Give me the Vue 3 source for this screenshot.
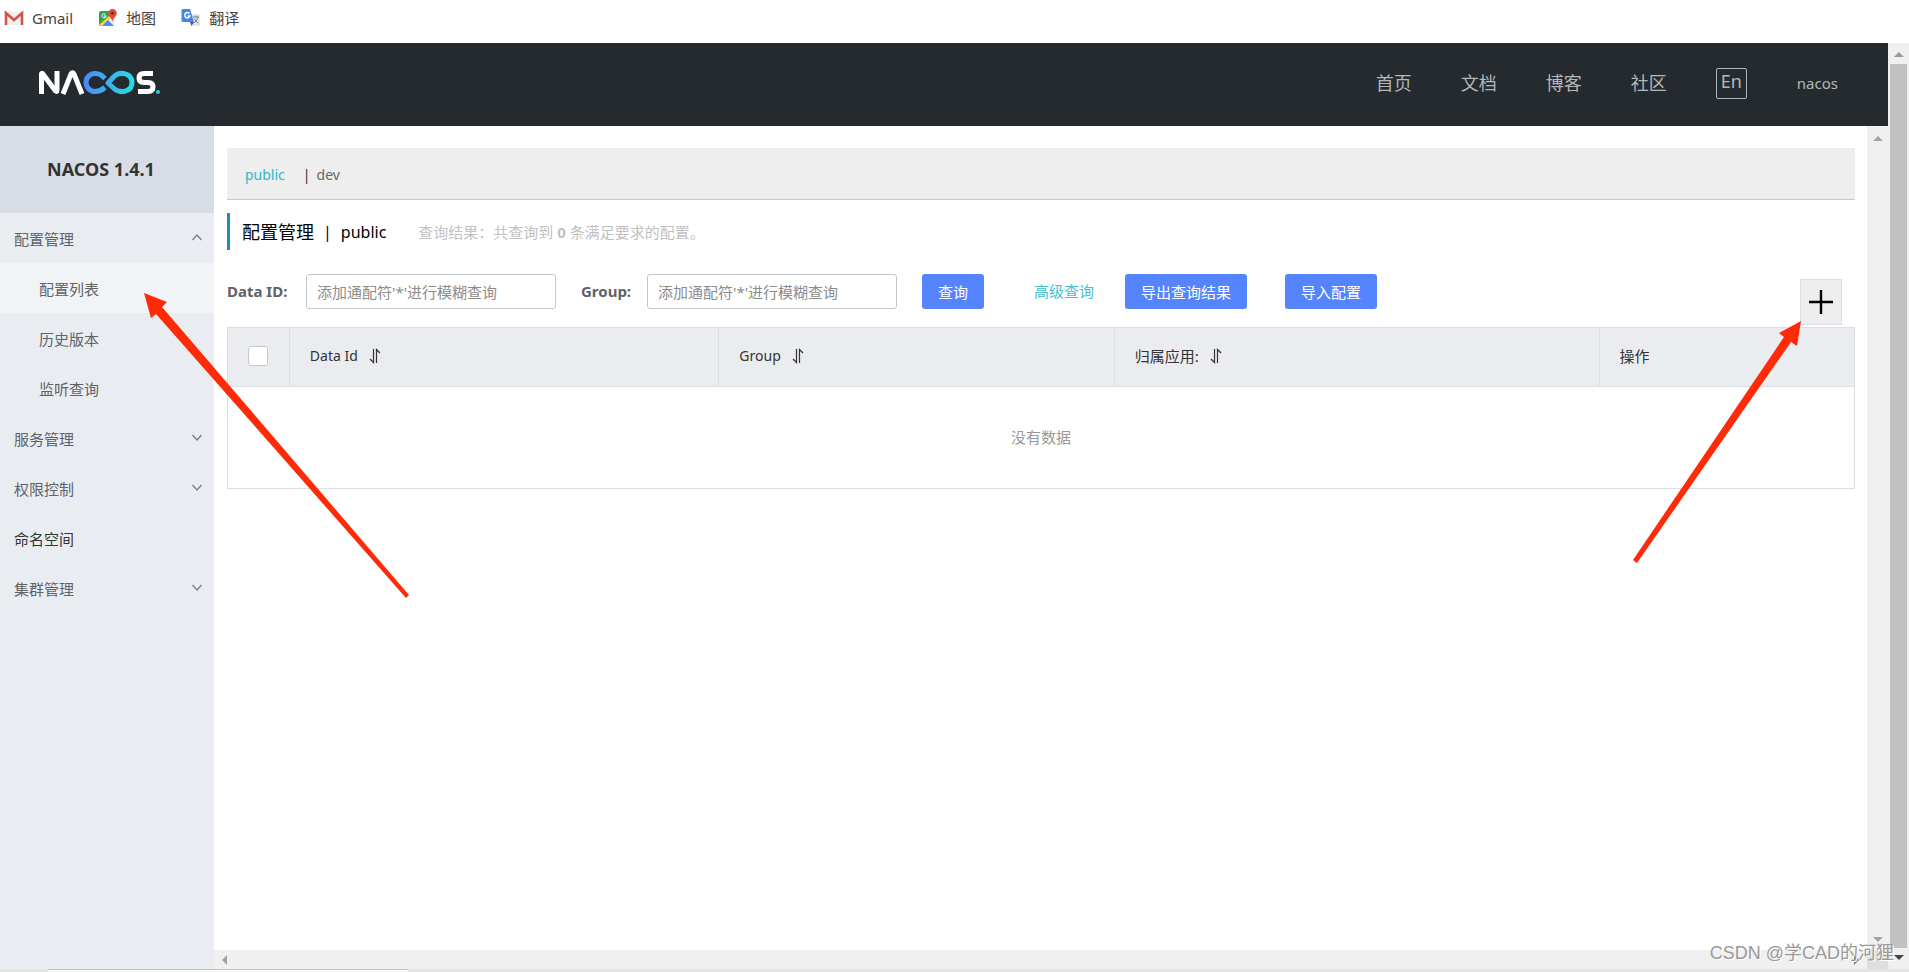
<script setup>
import { ref } from 'vue'

const links = ['首页', '文档', '博客', '社区']
const menu = [
  { text: '配置管理', arrow: 'up' },
  { text: '配置列表', sub: true, active: true },
  { text: '历史版本', sub: true },
  { text: '监听查询', sub: true },
  { text: '服务管理', arrow: 'down' },
  { text: '权限控制', arrow: 'down' },
  { text: '命名空间', dark: true },
  { text: '集群管理', arrow: 'down' },
]
const columns = [
  { text: 'Data Id', latin: true },
  { text: 'Group', latin: true },
  { text: '归属应用:' },
]
const dataId = ref('')
const group = ref('')
</script>

<template>
  <div class="page">
    <nav class="bookmarks" aria-label="书签">
      <a href="#">
        <svg width="20" height="16" viewBox="0 0 20 16">
          <rect x="1" y="2" width="18" height="13" rx="1" fill="#f1efee" />
          <path d="M2 15V3l8 7 8-7v12" fill="none" stroke="#d5524a" stroke-width="2.6" />
        </svg>
        <span>Gmail</span>
      </a>
      <a href="#">
        <svg width="20" height="18" viewBox="0 0 20 18">
          <rect x="1" y="2" width="16" height="15" rx="2" fill="#eceff0" />
          <path d="M3 2h9l-1 6-9 9q-1 0-1-2V4q0-2 2-2z" fill="#34a35a" />
          <path d="M1 16L12 6l2 2L5 17H2z" fill="#fbd04b" />
          <path d="M4 17l6-6 6 6z" fill="#4c8df5" />
          <path d="M7.500 5.500a2 2 0 1 0 .5 1.500H6" fill="none" stroke="#fff" />
          <path d="M14.500 0a4.300 4.300 0 0 1 4.300 4.300c0 3-3.500 4.500-4.300 8.500-.8-4-4.300-5.500-4.300-8.500A4.300 4.300 0 0 1 14.500 0z" fill="#e04a3f" />
          <circle cx="14.500" cy="4.300" r="1.500" fill="#7d2019" />
        </svg>
        <span>地图</span>
      </a>
      <a href="#">
        <svg width="20" height="18" viewBox="0 0 20 18">
          <path d="M9 5h8q2 0 2 2v9q0 1-1 1h-6z" fill="#e3e5e8" />
          <path d="M2 0h7l4 13H2q-1.500 0-1.500-1.500v-10Q.5 0 2 0z" fill="#4a83e8" />
          <path d="M9 13h4l-2.500 4z" fill="#3058b0" />
          <path d="M8.500 4.500A2.700 2.700 0 1 0 9 7H6.500" fill="none" stroke="#fff" stroke-width="1.400" />
          <path d="M12 8h6M15 6.500V8M17 8q-1 4-4 6M13.500 9.500q1 3 4 4.500" fill="none" stroke="#76828d" />
        </svg>
        <span>翻译</span>
      </a>
    </nav>

    <div class="viewport">
      <div class="app">
        <header class="topbar">
          <a href="#" aria-label="Nacos" class="logo">
            <svg width="124" height="26" viewBox="0 0 124 26">
              <defs>
                <linearGradient id="loop" x1="46" x2="96" y1="0" y2="0" gradientUnits="userSpaceOnUse">
                  <stop offset="0" stop-color="#4a86f7" />
                  <stop offset="1" stop-color="#26dce3" />
                </linearGradient>
              </defs>
              <g fill="none" stroke-width="5">
                <path d="M4.500 24V4q0-1 1-.5L18.500 21q1.500 1 1.500-.5V1" stroke="#fff" />
                <path d="M26 24L34 4q1.500-2.500 3 0l8 20" stroke="#fff" />
                <path d="M68 17.500C64 21 61 21.500 58 21.500a9 9 0 0 1 0-18c5 0 7 2 10 5" stroke="url(#loop)" />
                <path d="M71 13L77 6.500C83 1 95 3 95 12.500S83 24 77 18.500z" stroke="url(#loop)" stroke-linejoin="round" />
                <path d="M116 3.500h-9q-5 0-5 4.500t5 4.500h4q5 0 5 4.500t-5 4.500h-10" stroke="#fff" />
              </g>
              <circle cx="121" cy="22" r="2" fill="#26cfe0" />
            </svg>
          </a>
          <nav class="toplinks">
            <a v-for="l in links" :key="l" href="#">{{ l }}</a>
            <button class="lang" type="button">En</button>
            <a href="#" class="user">nacos</a>
          </nav>
        </header>

        <div class="body">
          <aside class="sidebar">
            <h1>NACOS 1.4.1</h1>
            <ul>
              <li v-for="m in menu" :key="m.text">
                <a href="#" :class="{ sub: m.sub, active: m.active, dark: m.dark }">
                  <span>{{ m.text }}</span>
                  <svg v-if="m.arrow" :class="m.arrow" width="12" height="12" viewBox="0 0 12 12">
                    <path v-if="m.arrow === 'up'" d="M1.500 7L6 2l4.500 5" fill="none" stroke="#777c82" stroke-width="1.200" />
                    <path v-else d="M1.500 2L6 7l4.500-5" fill="none" stroke="#777c82" stroke-width="1.200" />
                  </svg>
                </a>
              </li>
            </ul>
          </aside>

          <div class="frame">
            <main>
              <div class="spaces">
                <a href="#" class="current">public</a>
                <span class="bar">|</span>
                <a href="#">dev</a>
              </div>
              <div class="heading">
                <h2><span>配置管理</span><span class="latin">|</span><span class="latin">public</span></h2>
                <p>查询结果：共查询到 <strong>0</strong> 条满足要求的配置。</p>
              </div>
              <form class="search" @submit.prevent>
                <label for="data-id">Data ID:</label>
                <input id="data-id" v-model="dataId" type="text" placeholder="添加通配符'*'进行模糊查询">
                <label for="group" class="second">Group:</label>
                <input id="group" v-model="group" type="text" placeholder="添加通配符'*'进行模糊查询">
                <button type="submit" class="query">查询</button>
                <a href="#" class="advanced">高级查询</a>
                <button type="button" class="export">导出查询结果</button>
                <button type="button" class="import">导入配置</button>
                <button type="button" class="add" aria-label="新建配置">
                  <svg width="26" height="26" viewBox="0 0 26 26">
                    <path d="M13 1v24M1 13h24" stroke="#000" stroke-width="2.400" />
                  </svg>
                </button>
              </form>
              <table>
                <colgroup>
                  <col class="c-check"><col class="c-id"><col class="c-group"><col class="c-app"><col>
                </colgroup>
                <thead>
                  <tr>
                    <th class="check"><input type="checkbox" aria-label="全选"></th>
                    <th v-for="c in columns" :key="c.text">
                      <span class="th" :class="{ small: c.latin }">{{ c.text }}
                        <svg width="14" height="16" viewBox="0 0 14 16">
                          <path d="M5.500 1v13.500L2 11M8.500 15V1.500L12 5" fill="none" stroke="#333" stroke-width="1.200" />
                        </svg>
                      </span>
                    </th>
                    <th>操作</th>
                  </tr>
                </thead>
                <tbody>
                  <tr><td colspan="5">没有数据</td></tr>
                </tbody>
              </table>
            </main>
            <div class="vscroll">
              <svg width="10" height="5" viewBox="0 0 10 5"><path d="M0 5l5-5 5 5z" fill="#a3a3a3" /></svg>
              <svg width="10" height="5" viewBox="0 0 10 5"><path d="M0 0l5 5 5-5z" fill="#a3a3a3" /></svg>
            </div>
            <div class="hscroll">
              <svg width="5" height="10" viewBox="0 0 5 10"><path d="M5 0L0 5l5 5z" fill="#a3a3a3" /></svg>
              <svg width="5" height="10" viewBox="0 0 5 10"><path d="M0 0l5 5-5 5z" fill="#777" /></svg>
            </div>
            <div class="corner"></div>
          </div>
        </div>
      </div>
      <div class="outer-scroll">
        <svg width="10" height="5" viewBox="0 0 10 5"><path d="M0 5l5-5 5 5z" fill="#9a9a9a" /></svg>
        <div class="thumb"></div>
        <svg width="10" height="5" viewBox="0 0 10 5"><path d="M0 0l5 5 5-5z" fill="#444" /></svg>
      </div>
    </div>
    <div class="edge"><span></span></div>

    <svg class="pointer left" width="270" height="310" viewBox="0 0 270 310">
      <path d="M4 3L27 12l-5 5L269 305l-3 3L16 24l-5 4z" fill="#ff2a07" />
    </svg>
    <svg class="pointer right" width="172" height="247" viewBox="0 0 172 247">
      <path d="M170 3l-4 25-6-4L6 245l-4-3L153 19l-5-4z" fill="#ff2a07" />
    </svg>
    <div class="watermark">CSDN @学CAD的河狸</div>
  </div>
</template>

<style>
body { margin: 0; }
</style>

<style scoped>
* { box-sizing: border-box; }
.page {
  position: relative;
  display: flex;
  flex-direction: column;
  min-height: 100vh;
  overflow: hidden;
  background: #fff;
  color: #333;
  font: 15px/20px "Noto Sans", "Noto Sans CJK SC", sans-serif;
}
a { color: inherit; text-decoration: none; }
svg { display: block; flex: none; }
button, input { font: inherit; }

.bookmarks { display: flex; gap: 25px; height: 43px; padding: 8px 4px; color: #444; }
.bookmarks a { display: flex; gap: 8px; height: 20px; align-items: center; }

.viewport { display: flex; flex: 1; }
.app { display: flex; flex: 1; flex-direction: column; min-width: 0; }
.topbar {
  display: flex;
  align-items: center;
  justify-content: space-between;
  height: 83px;
  padding: 0 50px 3px 37px;
  background: #252a2f;
  color: #b4b7b9;
}
.toplinks { display: flex; align-items: center; font-size: 18px; }
.toplinks > a { margin-right: 49px; }
.lang {
  width: 31px;
  height: 31px;
  padding: 0 0 4px;
  border: 1px solid #b4b7b9;
  border-radius: 2px;
  background: none;
  color: inherit;
  line-height: 24px;
}
.toplinks > .user { margin: 0 0 0 50px; font-size: 15px; }

.body { display: flex; flex: 1; }
.sidebar { width: 214px; background: #e9edf2; color: #5f6368; }
.sidebar h1 {
  height: 87px;
  margin: 0;
  padding-right: 12px;
  background: #d8dde5;
  color: #333;
  font-size: 18px;
  line-height: 87px;
  text-align: center;
}
.sidebar ul { margin: 0; padding: 0; list-style: none; }
.sidebar li a {
  display: flex;
  align-items: center;
  justify-content: space-between;
  height: 50px;
  padding: 2px 11px 0 14px;
}
.sidebar li a.sub { padding-left: 39px; }
.sidebar .active { background: #f1f3f7; }
.sidebar .dark { color: #333; }

.frame {
  display: grid;
  flex: 1;
  grid-template: minmax(0, 1fr) 19px / minmax(0, 1fr) 21px;
  min-width: 0;
}
main { padding: 22px 12px 0 13px; }
.vscroll, .hscroll, .outer-scroll { display: flex; align-items: center; justify-content: space-between; background: #f0f0f0; }
.vscroll { flex-direction: column; padding: 10px 0 8px; }
.hscroll { padding: 0 8px; }
.corner { background: #dedede; }
.outer-scroll { flex-direction: column; width: 21px; padding: 9px 0; }
.thumb { flex: 1; width: 17px; margin: 7px 0; background: #c1c1c1; }
.edge { height: 3px; background: #e4e4e4; }
.edge span { display: block; width: 360px; height: 3px; margin-left: 48px; border-top: 1px solid #c0c0c0; background: #fafafa; }

.spaces {
  display: flex;
  height: 52px;
  padding: 0 18px;
  border-bottom: 1px solid #c8c8c8;
  background: #eee;
  color: #666;
  font-size: 14px;
  line-height: 54px;
}
.spaces .current { margin-right: 18px; color: #33b5cb; }
.spaces .bar { margin-right: 6px; color: #333; }
.heading {
  display: flex;
  align-items: center;
  height: 37px;
  margin: 13px 0 24px;
  padding-left: 12px;
  border-left: 3px solid #1f8fb0;
}
.heading h2 { display: flex; gap: 9px; margin: 0; color: #000; font-size: 18px; font-weight: 400; }
.heading .latin { font-size: 16px; }
.heading p { margin: 0 0 0 32px; color: #c1c1c1; }

.search { display: flex; height: 53px; color: #5f6266; }
.search label { width: 79px; font-weight: 700; line-height: 35px; }
.search .second { width: 66px; margin-left: 25px; }
.search input { width: 250px; height: 35px; padding: 0 10px; border: 1px solid #c4c6cf; border-radius: 3px; color: #333; }
.search input::placeholder { color: #8c8c8c; opacity: 1; }
.search button { height: 35px; padding: 0 16px; border: 0; border-radius: 3px; background: #5584ff; color: #fff; }
.search .query { margin-left: 25px; }
.search .advanced { margin: 0 31px 0 50px; color: #45bfca; line-height: 35px; }
.search .import { margin-left: 38px; }
.search .add {
  display: grid;
  place-items: center;
  align-self: flex-end;
  width: 42px;
  height: 46px;
  margin: 0 13px 2px auto;
  padding: 0;
  border: 1px solid #ddd;
  border-radius: 0;
  background: #eee;
}

table { width: 100%; border: 1px solid #dcdee3; border-collapse: collapse; table-layout: fixed; }
.c-check { width: 3.8%; }
.c-id { width: 26.4%; }
.c-group { width: 24.3%; }
.c-app { width: 29.8%; }
th {
  height: 59px;
  padding: 0 20px 2px;
  border: 1px solid #dcdee3;
  background: #ebecf0;
  font-weight: 400;
  text-align: left;
}
.th { display: flex; gap: 10px; align-items: center; }
.small { font-size: 14px; }
.check input {
  display: block;
  width: 20px;
  height: 20px;
  margin: 0;
  appearance: none;
  border: 1px solid #c4c6cf;
  border-radius: 3px;
  background: #fff;
}
td { height: 102px; padding: 0 0 2px; color: #999; text-align: center; }

.pointer { position: absolute; pointer-events: none; }
.left { top: 290px; left: 140px; }
.right { top: 318px; left: 1631px; }
.watermark {
  position: absolute;
  right: 15px;
  bottom: 8px;
  color: #999;
  font: 18px/22px "Liberation Sans", "Noto Sans CJK SC", sans-serif;
  text-shadow: 1px 1px 0 #fff;
}
</style>
